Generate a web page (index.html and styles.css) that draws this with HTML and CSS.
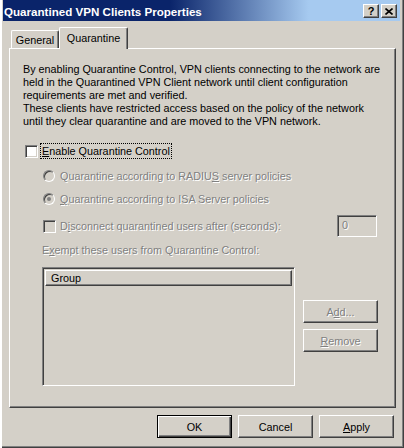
FILE: index.html
```html
<!DOCTYPE html>
<html lang="en">
<head>
    <meta charset="UTF-8">
    <title>Quarantined VPN Clients Properties</title>
    <link rel="stylesheet" href="styles.css">
</head>
<body>
    <div class="window">
        <div class="titlebar">
            <span class="title">Quarantined VPN Clients Properties</span>
            <div class="caption-buttons">
                <span class="cap-btn">?</span>
                <span class="cap-btn">
                    <svg width="8" height="7" viewBox="0 0 8 7"><path d="M0.5 0.5 L7.5 6.5 M7.5 0.5 L0.5 6.5" stroke="#000" stroke-width="1.6"/></svg>
                </span>
            </div>
        </div>

        <div class="tabs">
            <div class="tab general">General</div>
            <div class="tab active">Quarantine</div>
        </div>

        <div class="panel">
            <p class="intro">
                By enabling Quarantine Control, VPN clients connecting to the network are<br>
                held in the Quarantined VPN Client network until client configuration<br>
                requirements are met and verified.<br>
                These clients have restricted access based on the policy of the network<br>
                until they clear quarantine and are moved to the VPN network.
            </p>

            <div class="row enable">
                <span class="check"></span>
                <span class="focus"><u>E</u>nable Quarantine Control</span>
            </div>

            <div class="row sub radio-first disabled">
                <span class="radio"></span>
                <span>Quarantine according to RADIU<u>S</u> server policies</span>
            </div>

            <div class="row sub radio-second disabled">
                <span class="radio checked"></span>
                <span><u>Q</u>uarantine according to ISA Server policies</span>
            </div>

            <div class="row sub timeout disabled">
                <div class="option">
                    <span class="check off"></span>
                    <span>D<u>i</u>sconnect quarantined users after (seconds):</span>
                </div>
                <div class="field">0</div>
            </div>

            <div class="label disabled">E<u>x</u>empt these users from Quarantine Control:</div>

            <div class="exempt">
                <div class="listbox">
                    <div class="list-head">Group</div>
                </div>
                <div class="side-buttons">
                    <div class="btn disabled">A<u>d</u>d...</div>
                    <div class="btn disabled"><u>R</u>emove</div>
                </div>
            </div>
        </div>

        <div class="footer">
            <div class="btn default">OK</div>
            <div class="btn">Cancel</div>
            <div class="btn"><u>A</u>pply</div>
        </div>
    </div>
</body>
</html>
```

FILE: styles.css
```css
body {
    margin: 0;
    background-color: #d4d0c8;
    font-family: Tahoma, "Liberation Sans", Arial, sans-serif;
    font-size: 10.8px;
    color: #000000;
}
.window {
    width: 404px;
    height: 448px;
    box-sizing: border-box;
    padding: 0 4px 4px 3px;
    background-color: #d4d0c8;
    box-shadow: inset 2px 0 #ffffff, inset -1px -1px #404040, inset -2px -2px #808080;
}
.titlebar {
    height: 21px;
    box-sizing: border-box;
    padding: 1px 3px 0 1px;
    display: flex;
    align-items: center;
    justify-content: space-between;
    background: linear-gradient(to right, #0a246a 0%, #0a246a 42%, #a6caf0 77%, #a6caf0 100%);
    color: #ffffff;
    font-size: 11.6px;
    font-weight: bold;
}
.caption-buttons {
    display: flex;
    gap: 2px;
}
.cap-btn {
    width: 16px;
    height: 14px;
    box-sizing: border-box;
    display: flex;
    align-items: center;
    justify-content: center;
    background-color: #d4d0c8;
    border: 1px solid;
    border-color: #ffffff #404040 #404040 #ffffff;
    box-shadow: inset -1px -1px #808080;
    color: #000000;
    font-size: 11px;
    font-weight: bold;
    line-height: 12px;
}
.tabs {
    display: flex;
    align-items: flex-end;
    height: 21px;
    margin: 6px 0 0 8px;
}
.tab {
    height: 18px;
    box-sizing: border-box;
    padding-top: 3px;
    text-align: center;
    border: 1px solid;
    border-bottom: none;
    border-color: #ffffff #404040 #ffffff #ffffff;
    border-radius: 2px 2px 0 0;
    box-shadow: inset -1px 0 #808080;
    background-color: #d4d0c8;
}
.tab.general {
    width: 48px;
}
.tab.active {
    width: 69px;
    height: 22px;
    padding-top: 4px;
    margin-bottom: -1px;
    position: relative;
    z-index: 1;
}
.panel {
    width: 387px;
    height: 360px;
    box-sizing: border-box;
    margin-left: 6px;
    padding-top: 14px;
    border: 1px solid;
    border-color: #ffffff #404040 #404040 #ffffff;
    box-shadow: inset -1px -1px #808080;
}
.intro {
    margin: 0 0 0 13px;
    line-height: 13px;
    white-space: nowrap;
}
.row {
    display: flex;
    align-items: center;
    height: 16px;
    gap: 4px;
    white-space: nowrap;
}
.enable {
    margin-top: 15px;
    padding-left: 15px;
    gap: 3px;
}
.focus {
    padding: 1px;
    outline: 1px dotted #000000;
    line-height: 12px;
}
.sub {
    padding-left: 33px;
}
.radio-first {
    margin-top: 9px;
}
.radio-second {
    margin-top: 7px;
}
.timeout {
    height: 22px;
    margin-top: 8px;
    padding-right: 18px;
    justify-content: space-between;
}
.option {
    display: flex;
    align-items: center;
    gap: 4px;
}
.disabled {
    color: #808080;
    text-shadow: 1px 1px 0 #ffffff;
}
.check {
    width: 13px;
    height: 13px;
    box-sizing: border-box;
    border: 1px solid;
    border-color: #808080 #ffffff #ffffff #808080;
    box-shadow: inset 1px 1px #404040, inset -1px -1px #d4d0c8;
    background-color: #ffffff;
}
.check.off {
    background-color: #d4d0c8;
}
.radio {
    width: 12px;
    height: 12px;
    margin-right: 1px;
    box-sizing: border-box;
    border-radius: 50%;
    border: 1px solid;
    border-color: #808080 #ffffff #ffffff #808080;
    box-shadow: inset 1px 1px #404040;
    background-color: #d4d0c8;
    display: flex;
    align-items: center;
    justify-content: center;
}
.radio.checked::after {
    content: "";
    width: 4px;
    height: 4px;
    border-radius: 50%;
    background-color: #808080;
}
.field {
    width: 40px;
    height: 22px;
    box-sizing: border-box;
    padding: 3px 0 0 4px;
    border: 1px solid;
    border-color: #808080 #ffffff #ffffff #808080;
    box-shadow: inset 1px 1px #404040, inset -1px -1px #d4d0c8;
}
.label {
    height: 16px;
    line-height: 16px;
    margin-top: 5px;
    padding-left: 32px;
}
.exempt {
    display: flex;
    gap: 8px;
    margin-top: 9px;
    padding-left: 32px;
}
.listbox {
    width: 253px;
    height: 119px;
    box-sizing: border-box;
    border: 1px solid;
    border-color: #808080 #ffffff #ffffff #808080;
    box-shadow: inset 1px 1px #404040, inset -1px -1px #d4d0c8;
    padding: 2px 2px 0 2px;
}
.list-head {
    height: 16px;
    box-sizing: border-box;
    padding: 1px 0 0 5px;
    border: 1px solid;
    border-color: #ffffff #404040 #404040 #ffffff;
    box-shadow: inset -1px -1px #808080;
}
.side-buttons {
    display: flex;
    flex-direction: column;
    gap: 6px;
    padding-top: 33px;
}
.btn {
    width: 75px;
    height: 23px;
    box-sizing: border-box;
    display: flex;
    align-items: center;
    justify-content: center;
    border: 1px solid;
    border-color: #ffffff #404040 #404040 #ffffff;
    box-shadow: inset -1px -1px #808080;
    background-color: #d4d0c8;
}
.btn.default {
    border-color: #000000;
    box-shadow: inset 1px 1px #ffffff, inset -1px -1px #404040, inset -2px -2px #808080;
}
.footer {
    display: flex;
    justify-content: flex-end;
    gap: 6px;
    margin-top: 7px;
    padding-right: 6px;
}
```
